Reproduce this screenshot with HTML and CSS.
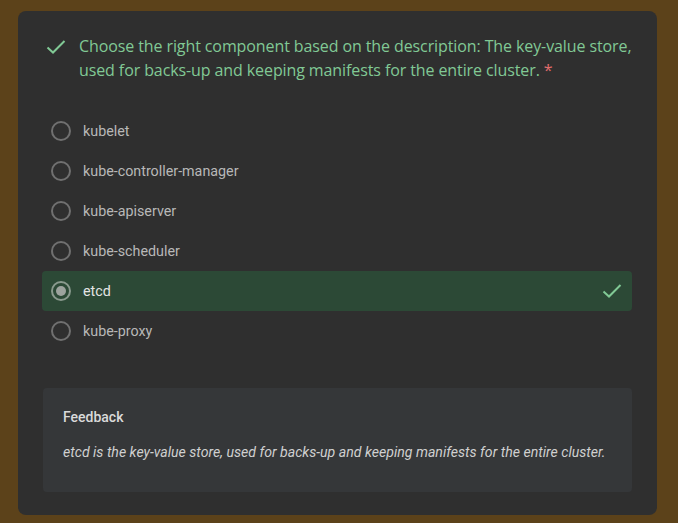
FILE: index.html
```html
<!DOCTYPE html>
<html>
<head>
<meta charset="utf-8">
<link rel="stylesheet" href="styles.css">
</head>
<body>
<div class="card">
  <div class="title">
    <svg class="title-check" width="20" height="16" viewBox="0 0 20 16"><path d="M1.5 8.5 L7 13.5 L18.5 2" fill="none" stroke="#81c995" stroke-width="2"/></svg>
    <div class="title-text">Choose the right component based on the description: The key-value store, used for backs-up and keeping manifests for the entire cluster.&nbsp;<span class="req">*</span></div>
  </div>
  <div class="options">
    <div class="opt"><span class="radio"></span><span class="label">kubelet</span></div>
    <div class="opt"><span class="radio"></span><span class="label">kube-controller-manager</span></div>
    <div class="opt"><span class="radio"></span><span class="label">kube-apiserver</span></div>
    <div class="opt"><span class="radio"></span><span class="label">kube-scheduler</span></div>
    <div class="opt selected"><span class="radio on"><span class="dot"></span></span><span class="label">etcd</span>
      <svg class="opt-check" width="20" height="16" viewBox="0 0 20 16"><path d="M1.5 8.5 L7 13.5 L18.5 2" fill="none" stroke="#81c995" stroke-width="2"/></svg>
    </div>
    <div class="opt"><span class="radio"></span><span class="label">kube-proxy</span></div>
  </div>
  <div class="feedback">
    <div class="fb-title">Feedback</div>
    <div class="fb-text">etcd is the key-value store, used for backs-up and keeping manifests for the entire cluster.</div>
  </div>
</div>
</body>
</html>
```
FILE: styles.css
```css
html, body { margin: 0; padding: 0; }
body {
  background: #5c421a;
  width: 678px;
  height: 523px;
  overflow: hidden;
  font-family: Roboto, "Liberation Sans", sans-serif;
}
.card {
  margin: 11px 0 0 18px;
  width: 639px;
  height: 504px;
  box-sizing: border-box;
  background: #2f2f2f;
  border-radius: 8px;
  padding: 23px 25px 23px 24px;
  display: flex;
  flex-direction: column;
}
.title {
  display: flex;
  align-items: flex-start;
}
.title-check { margin: 5px 13px 0 4px; flex: none; }
.title-text {
  font-family: "Open Sans", sans-serif;
  font-size: 16px;
  line-height: 24px;
  color: #81c995;
  letter-spacing: -0.1px;
}
.req { color: #e06c6c; }
.options {
  margin-top: 29px;
  display: flex;
  flex-direction: column;
}
.opt {
  height: 40px;
  display: flex;
  align-items: center;
  padding-left: 9px;
  border-radius: 4px;
}
.opt.selected { background: #2c4936; }
.radio {
  width: 20px;
  height: 20px;
  box-sizing: border-box;
  border: 2px solid #707070;
  border-radius: 50%;
  display: flex;
  align-items: center;
  justify-content: center;
  flex: none;
}
.radio.on { border-color: #8a9a8e; }
.dot { width: 10px; height: 10px; border-radius: 50%; background: #9da39e; }
.label {
  margin-left: 12px;
  font-size: 14.3px;
  color: #b8b8b8;
  flex: 1;
}
.selected .label { color: #e4e4e4; }
.opt-check { margin-right: 10px; }
.feedback {
  margin-top: 37px;
  margin-left: 1px;
  background: #353739;
  border-radius: 4px;
  height: 104px;
  box-sizing: border-box;
  padding: 21px 20px;
}
.fb-title {
  font-size: 14px;
  font-weight: 500;
  color: #dadada;
}
.fb-text {
  margin-top: 19px;
  font-size: 14.1px;
  font-style: italic;
  color: #d0d0d0;
}
```
